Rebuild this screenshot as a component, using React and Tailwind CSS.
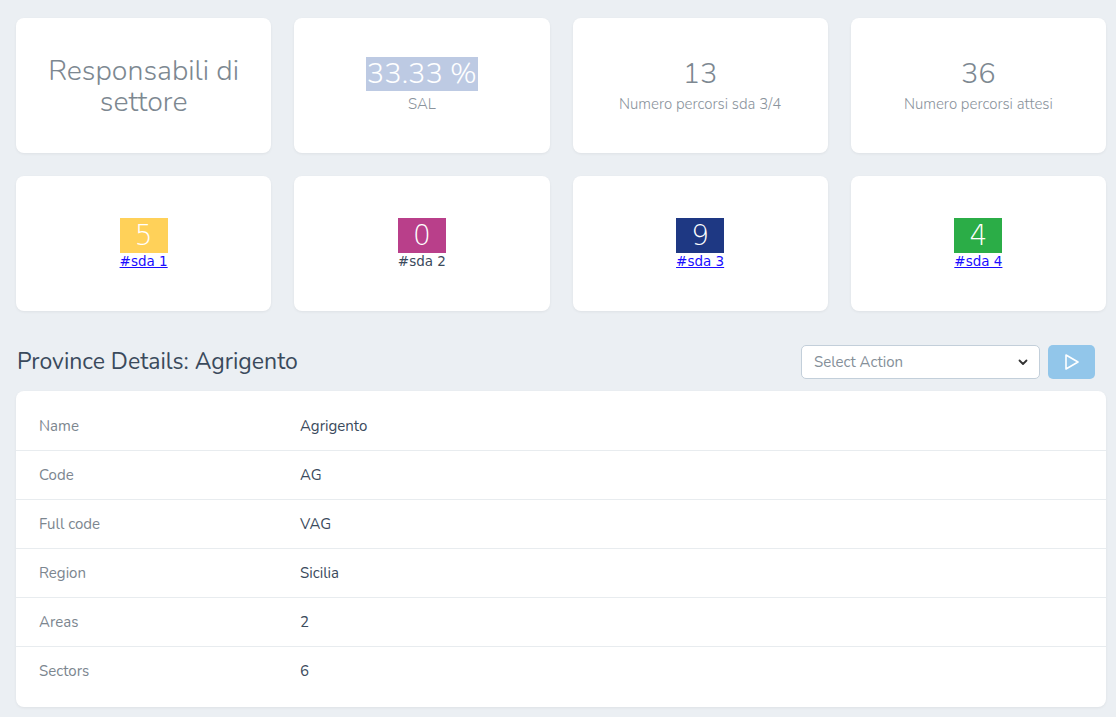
import React from "react";

const font = { fontFamily: "Nunito, 'Noto Sans', Lato, sans-serif" };

function StatCard({ children }) {
  return (
    <div className="h-[135px] bg-white rounded-lg shadow-[0_1px_3px_rgba(0,0,0,0.06)] flex flex-col items-center justify-center text-center">
      {children}
    </div>
  );
}

function Badge({ value, color, label, link }) {
  return (
    <StatCard>
      <div className="inline-flex flex-col items-stretch" style={{ fontFamily: "'DejaVu Sans', sans-serif" }}>
        <div className={`h-[35px] ${color} text-white text-[28px] leading-[35px] text-center font-extralight`}>{value}</div>
        {link ? (
          <a href="#" className="text-[13.5px] leading-[16px] text-[#1a0dff] underline">{label}</a>
        ) : (
          <span className="text-[13.5px] leading-[16px] text-[#3b4a5c]">{label}</span>
        )}
      </div>
    </StatCard>
  );
}

const rows = [
  ["Name", "Agrigento"],
  ["Code", "AG"],
  ["Full code", "VAG"],
  ["Region", "Sicilia"],
  ["Areas", "2"],
  ["Sectors", "6"],
];

export default function App() {
  return (
    <div className="min-h-[717px] bg-[#ebeff3] pt-[18px] pl-4 pb-[9px]" style={font}>
      <div className="w-[1090px] grid grid-cols-4 gap-x-[23px] gap-y-[23px]">
        <StatCard>
          <div className="text-[28.5px] leading-[31px] text-[#7d8891] font-light px-6">Responsabili di<br />settore</div>
        </StatCard>
        <StatCard>
          <div className="text-[29px] leading-[34px] text-white bg-[#bdcae3] px-[1px] font-light">33.33 %</div>
          <div className="text-[15px] leading-[20px] mt-[3px] text-[#8a939c] font-light">SAL</div>
        </StatCard>
        <StatCard>
          <div className="text-[29px] leading-[34px] text-[#7d8891] font-light">13</div>
          <div className="text-[15px] leading-[20px] mt-[3px] text-[#8a939c] font-light">Numero percorsi sda 3/4</div>
        </StatCard>
        <StatCard>
          <div className="text-[29px] leading-[34px] text-[#7d8891] font-light">36</div>
          <div className="text-[15px] leading-[20px] mt-[3px] text-[#8a939c] font-light">Numero percorsi attesi</div>
        </StatCard>
        <Badge value="5" color="bg-[#ffd159]" label="#sda 1" link />
        <Badge value="0" color="bg-[#b93f8a]" label="#sda 2" />
        <Badge value="9" color="bg-[#1e3883]" label="#sda 3" link />
        <Badge value="4" color="bg-[#2bad47]" label="#sda 4" link />
      </div>

      <div className="w-[1090px] mt-[34px] flex items-center justify-between">
        <h2 className="text-[23px] leading-[30px] text-[#3a4a5c] pl-[1px]">Province Details: Agrigento</h2>
        <div className="flex items-center gap-2 mr-[11px]">
          <div className="w-[239px] h-[34px] bg-white border border-[#c3cfda] rounded-[5px] flex items-center justify-between pl-3 pr-[11px]">
            <span className="text-[15px] text-[#858f99]">Select Action</span>
            <svg width="10" height="7" viewBox="0 0 10 7" fill="none">
              <path d="M1.5 1.5 L5 5 L8.5 1.5" stroke="#333" strokeWidth="1.8" strokeLinecap="round" strokeLinejoin="round" />
            </svg>
          </div>
          <div className="w-[47px] h-[34px] rounded-[5px] bg-[#92c6ea] flex items-center justify-center">
            <svg width="16" height="18" viewBox="0 0 16 18" fill="none">
              <path d="M2 2 L14 9 L2 16 Z" stroke="white" strokeWidth="1.6" strokeLinejoin="round" />
            </svg>
          </div>
        </div>
      </div>

      <div className="w-[1090px] mt-[12px] bg-white rounded-lg shadow-[0_1px_3px_rgba(0,0,0,0.06)] pt-[11px] pb-[11px]">
        {rows.map(([k, v], i) => (
          <div
            key={k}
            className={`h-[49px] flex items-center text-[15px] ${i < rows.length - 1 ? "border-b border-[#e8ecef]" : ""}`}
          >
            <div className="w-[284px] pl-[23px] text-[#7c868f]">{k}</div>
            <div className="text-[#3a4a5c]">{v}</div>
          </div>
        ))}
      </div>
    </div>
  );
}
